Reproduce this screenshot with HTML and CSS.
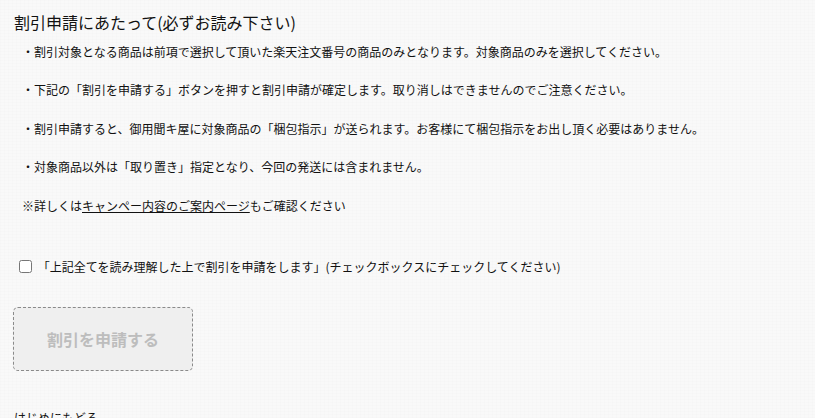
FILE: index.html
```html
<!DOCTYPE html>
<html lang="ja">
<head>
<meta charset="utf-8">
<title>割引申請</title>
<link rel="stylesheet" href="styles.css">
</head>
<body>
<main class="page">
  <h2 class="title">割引申請にあたって(必ずお読み下さい)</h2>
  <div class="notes">
    <p class="note">・割引対象となる商品は前項で選択して頂いた楽天注文番号の商品のみとなります。対象商品のみを選択してください。</p>
    <p class="note">・下記の「割引を申請する」ボタンを押すと割引申請が確定します。取り消しはできませんのでご注意ください。</p>
    <p class="note">・割引申請すると、御用聞キ屋に対象商品の「梱包指示」が送られます。お客様にて梱包指示をお出し頂く必要はありません。</p>
    <p class="note">・対象商品以外は「取り置き」指定となり、今回の発送には含まれません。</p>
    <p class="note">※詳しくは<a class="link" href="#">キャンペー内容のご案内ページ</a>もご確認ください</p>
  </div>
  <label class="agree"><input type="checkbox" class="check"> 「上記全てを読み理解した上で割引を申請をします」(チェックボックスにチェックしてください)</label>
  <button class="submit" type="button" disabled>割引を申請する</button>
  <p class="back">はじめにもどる</p>
</main>
</body>
</html>
```

FILE: styles.css
```css
html, body {
  margin: 0;
  padding: 0;
}
body {
  background-color: #f9f9f9;
  background-image:
    repeating-linear-gradient(0deg, rgba(0,0,0,0.008) 0 1px, transparent 1px 3px),
    repeating-linear-gradient(90deg, rgba(0,0,0,0.008) 0 1px, transparent 1px 4px);
  color: #111;
  font-family: "Noto Sans CJK JP", "Noto Sans", sans-serif;
  overflow: hidden;
}
.page {
  padding: 12px 0 0 13px;
  display: flex;
  flex-direction: column;
  align-items: flex-start;
}
.title {
  margin: 0;
  font-size: 16px;
  font-weight: normal;
  line-height: 20px;
  padding-left: 1px;
}
.notes {
  margin-top: 10px;
  padding-left: 9px;
}
.note {
  margin: 0 0 19.2px;
  font-size: 12px;
  line-height: 19.2px;
}
.note:last-child {
  margin-bottom: 0;
}
.link {
  color: #111;
  text-decoration: underline;
}
.agree {
  margin-top: 42.5px;
  font-size: 12px;
  line-height: 19.2px;
  display: flex;
  align-items: center;
  white-space: pre;
}
.check {
  margin: 0 3px 0 6px;
  width: 13px;
  height: 13px;
}
.submit {
  margin-top: 30.4px;
  width: 180px;
  height: 64px;
  background: #efefef;
  border: 1px dashed #8a8a8a;
  border-radius: 5px;
  color: #bdbdbd;
  font-family: "Noto Sans CJK JP", "Noto Sans", sans-serif;
  font-size: 16px;
  font-weight: bold;
  padding: 0;
}
.back {
  margin: 37px 0 0 1px;
  font-size: 12px;
  line-height: 19.2px;
}
```
